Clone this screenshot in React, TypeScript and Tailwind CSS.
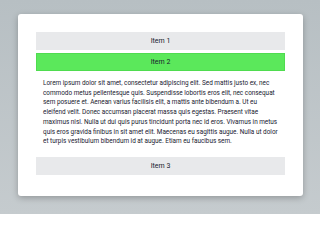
export default function App() {
  const lorem =
    "Lorem ipsum dolor sit amet, consectetur adipiscing elit. Sed mattis justo ex, nec commodo metus pellentesque quis. Suspendisse lobortis eros elit, nec consequat sem posuere et. Aenean varius facilisis elit, a mattis ante bibendum a. Ut eu eleifend velit. Donec accumsan placerat massa quis egestas. Praesent vitae maximus nisl. Nulla ut dui quis purus tincidunt porta nec id eros. Vivamus in metus quis eros gravida finibus in sit amet elit. Maecenas eu sagittis augue. Nulla ut dolor et turpis vestibulum bibendum id at augue. Etiam eu faucibus sem.";

  return (
    <div className="h-[214px] w-[320px] bg-gradient-to-b from-[#b7bfc3] to-[#c5cbce] pt-[14px] pl-[18px] font-['Roboto',sans-serif] text-[#18212f]">
      <div className="h-[182px] w-[285px] rounded-[3px] bg-white px-[18px] pt-[18px] shadow-[0_2px_6px_rgba(0,0,0,0.25)]">
        <div className="flex flex-col gap-[3px]">
          <div className="flex h-[18px] items-center justify-center bg-[#e8e9eb] text-[7px]">Item 1</div>
          <div className="flex h-[18px] items-center justify-center border border-[#4fdc4f] bg-[#5be85b] text-[7px]">Item 2</div>
          <p className="px-[7px] pt-[5px] pb-[7px] text-[6.4px] leading-[9.7px]">{lorem}</p>
          <div className="flex h-[18px] items-center justify-center bg-[#e8e9eb] text-[7px]">Item 3</div>
        </div>
      </div>
    </div>
  );
}
